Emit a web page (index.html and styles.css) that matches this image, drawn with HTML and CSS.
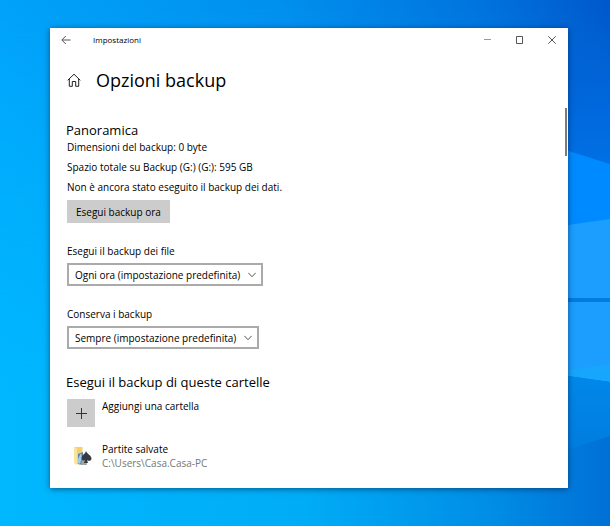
FILE: index.html
```
<!DOCTYPE html>
<html lang="it">
<head>
    <meta charset="UTF-8">
    <meta name="viewport" content="width=device-width, initial-scale=1.0">
    <title>Impostazioni</title>
    <link rel="stylesheet" href="styles.css">
</head>
<body>

<!-- Sfondo del desktop -->
<svg class="wallpaper" viewBox="0 0 610 526" preserveAspectRatio="none" aria-hidden="true">
    <defs>
        <linearGradient id="sky" x1="0" y1="0.3" x2="1" y2="0">
            <stop offset="0" stop-color="#00a6fc"/>
            <stop offset="0.5" stop-color="#0090ee"/>
            <stop offset="0.8" stop-color="#0074de"/>
            <stop offset="1" stop-color="#0058cc"/>
        </linearGradient>
        <linearGradient id="floor" x1="0" y1="0" x2="1" y2="0">
            <stop offset="0" stop-color="#00b8ff"/>
            <stop offset="0.5" stop-color="#00acf6"/>
            <stop offset="0.8" stop-color="#008ee6"/>
            <stop offset="1" stop-color="#0070d6"/>
        </linearGradient>
        <linearGradient id="fade" x1="0" y1="0" x2="0" y2="1">
            <stop offset="0" stop-color="#fff" stop-opacity="0"/>
            <stop offset="0.75" stop-color="#fff"/>
        </linearGradient>
        <linearGradient id="beam" x1="0" y1="0" x2="0" y2="1">
            <stop offset="0" stop-color="#0060d4" stop-opacity="0"/>
            <stop offset="0.4" stop-color="#0064d8"/>
            <stop offset="1" stop-color="#0070e4"/>
        </linearGradient>
        <linearGradient id="ground" x1="0" y1="0" x2="0" y2="1">
            <stop offset="0" stop-color="#0088ea"/>
            <stop offset="1" stop-color="#007cde"/>
        </linearGradient>
        <mask id="lower"><rect width="610" height="526" fill="url(#fade)"/></mask>
    </defs>
    <rect width="610" height="526" fill="url(#sky)"/>
    <rect width="610" height="526" fill="url(#floor)" mask="url(#lower)"/>
    <path d="M540 20 H610 V164 L540 142 Z" fill="url(#beam)"/>
    <path d="M540 142 L610 164 V240 H540 Z" fill="#008aff"/>
    <path d="M540 229 L610 219 V298 H540 Z" fill="#1c9eff"/>
    <path d="M540 302 H610 V365 L568 371 L540 376 Z" fill="#1c9eff"/>
    <path d="M540 374 L610 364 V382 L568 376 Z" fill="#16a6fc"/>
    <path d="M540 298 H610 V302 H540 Z" fill="#007cdc"/>
    <path d="M540 374 L568 376 L610 382 V436 L540 458 Z" fill="url(#ground)"/>
</svg>

<div class="window">
    <header class="titlebar">
        <button class="icon-button" aria-label="Indietro">
            <svg width="10" height="10" viewBox="0 0 10 10"><path d="M9.500 5H1M4.800 1L.8 5l4 4"/></svg>
        </button>
        <span class="title">Impostazioni</span>
        <div class="controls">
            <button class="icon-button" aria-label="Riduci a icona">
                <svg class="light" width="8" height="8" viewBox="0 0 8 8"><path d="M0 3.500H7"/></svg>
            </button>
            <button class="icon-button" aria-label="Ingrandisci">
                <svg width="8" height="8" viewBox="0 0 8 8"><path d="M.5.5h6v7h-6z"/></svg>
            </button>
            <button class="icon-button" aria-label="Chiudi">
                <svg width="8" height="8" viewBox="0 0 8 8"><path d="M.3.3l7.400 7.400M7.700.3L.3 7.700"/></svg>
            </button>
        </div>
    </header>

    <main class="content">
        <div class="page-header">
            <a href="#" class="home" aria-label="Home">
                <svg width="14" height="14" viewBox="0 0 14 14"><path d="M.7 7.300L7 1.200l6.300 6.100M2.300 6v7.300h3V8.500h3.400v4.800h3V6"/></svg>
            </a>
            <h1>Opzioni backup</h1>
        </div>

        <section class="overview">
            <h2>Panoramica</h2>
            <p>Dimensioni del backup: 0 byte</p>
            <p>Spazio totale su Backup (G:) (G:): 595 GB</p>
            <p>Non è ancora stato eseguito il backup dei dati.</p>
            <button class="button">Esegui backup ora</button>
        </section>

        <div class="form-group">
            <label for="frequency">Esegui il backup dei file</label>
            <div class="select">
                <select id="frequency">
                    <option>Ogni ora (impostazione predefinita)</option>
                </select>
                <svg width="8" height="6" viewBox="0 0 8 6"><path d="M.3.8L4 4.700 7.700.8"/></svg>
            </div>
        </div>

        <div class="form-group">
            <label for="keep">Conserva i backup</label>
            <div class="select">
                <select id="keep">
                    <option>Sempre (impostazione predefinita)</option>
                </select>
                <svg width="8" height="6" viewBox="0 0 8 6"><path d="M.3.8L4 4.700 7.700.8"/></svg>
            </div>
        </div>

        <section class="folders">
            <h2>Esegui il backup di queste cartelle</h2>
            <div class="row">
                <button class="add" id="add" aria-labelledby="add-label">
                    <svg width="12" height="12" viewBox="0 0 12 12"><path d="M6.500 1v11M1 6.500h11"/></svg>
                </button>
                <label id="add-label" for="add">Aggiungi una cartella</label>
            </div>
            <div class="row">
                <div class="folder-icon">
                    <svg width="18" height="20" viewBox="0 0 18 20">
                        <path d="M0 1h8.500v5l-2 13L0 17z" fill="#f3cf70"/>
                        <path d="M0 1l3 1v17l-3-2z" fill="#fbe39b"/>
                        <path d="M4 8l5-2v13l-5-1z" fill="#4c87b8"/>
                        <path d="M4 13l3-6 1 4-2 7-2-1z" fill="#a5cbe5"/>
                        <path d="M8 13h4l1 6H7z" fill="#9ea5aa"/>
                        <path d="M12 5c1 3 5.500 4.500 5.500 7.500 0 2.500-3 3-4.500 1.500l1 3h-4l1-3c-2 1-3.500 0-3.500-2C7.500 9 11.500 8 12 5z" fill="#353a43"/>
                    </svg>
                </div>
                <div class="folder-text">
                    <div>Partite salvate</div>
                    <div class="path">C:\Users\Casa.Casa-PC</div>
                </div>
            </div>
        </section>
    </main>
    <div class="scroll-thumb"></div>
</div>

</body>
</html>
```
FILE: styles.css
```
* {
    box-sizing: border-box;
}
body {
    margin: 0;
    min-height: 100vh;
    padding: 28px 42px 38px 50px;
    display: flex;
    position: relative;
    background: #0096f0;
    font-family: "Open Sans", "Noto Sans", sans-serif;
    font-size: 10px;
    line-height: 14px;
    color: #000;
}
h1, h2, p {
    margin: 0;
    font-weight: normal;
}
button, select {
    font: inherit;
    color: inherit;
    border: none;
    border-radius: 0;
    padding: 0;
}
svg {
    display: block;
    fill: none;
    stroke: #555;
}
.wallpaper {
    position: absolute;
    top: 0;
    left: 0;
    width: 100%;
    height: 100%;
    stroke: none;
}
.window {
    position: relative;
    flex: 1;
    background: #fff;
    box-shadow: 0 1px 6px rgba(0, 30, 70, 0.6);
}
.titlebar {
    display: flex;
    align-items: center;
    height: 24px;
}
.icon-button {
    display: flex;
    align-items: center;
    justify-content: center;
    width: 32px;
    height: 24px;
    background: none;
}
.icon-button .light {
    stroke: #999;
}
.title {
    margin-left: 11px;
    font-size: 8px;
}
.controls {
    display: flex;
    margin-left: auto;
}
.content {
    padding: 14px 16px 16px;
}
.page-header {
    display: flex;
    align-items: center;
    gap: 15px;
    height: 28px;
    padding-left: 1px;
}
.home svg {
    stroke: #222;
}
h1 {
    font-size: 18px;
    line-height: 28px;
}
h2 {
    font-size: 13px;
    line-height: 18px;
}
.overview {
    margin-top: 27px;
}
.overview p {
    padding-left: 1px;
    line-height: 20px;
}
.overview h2 {
    margin-bottom: -2px;
}
.button {
    display: block;
    height: 23px;
    margin: 3px 0 0 1px;
    padding: 0 9px;
    background: #ccc;
}
.form-group {
    margin: 21px 0 0 1px;
}
.form-group label {
    display: block;
    margin-bottom: 5px;
}
.select {
    position: relative;
    display: inline-block;
    vertical-align: top;
}
.select select {
    display: block;
    appearance: none;
    height: 23px;
    padding: 0 20px 0 6px;
    background: #fff;
    border: 2px solid #aaa;
}
.select svg {
    position: absolute;
    top: 9px;
    right: 7px;
    pointer-events: none;
}
.folders {
    margin-top: 24px;
}
.row {
    display: flex;
    gap: 7px;
    margin-left: 1px;
}
.row + .row {
    margin-top: 15px;
}
.folders h2 {
    margin-bottom: 8px;
}
.add, .folder-icon {
    display: flex;
    align-items: center;
    justify-content: center;
    width: 28px;
    height: 28px;
}
.add {
    background: #ccc;
}
.add svg {
    stroke: #333;
}
.folder-icon {
    padding-left: 4px;
}
.folder-icon svg {
    stroke: none;
}
.path {
    color: #767676;
}
.scroll-thumb {
    position: absolute;
    top: 80px;
    right: 1px;
    width: 2px;
    height: 48px;
    background: #7a7a7a;
}
```
